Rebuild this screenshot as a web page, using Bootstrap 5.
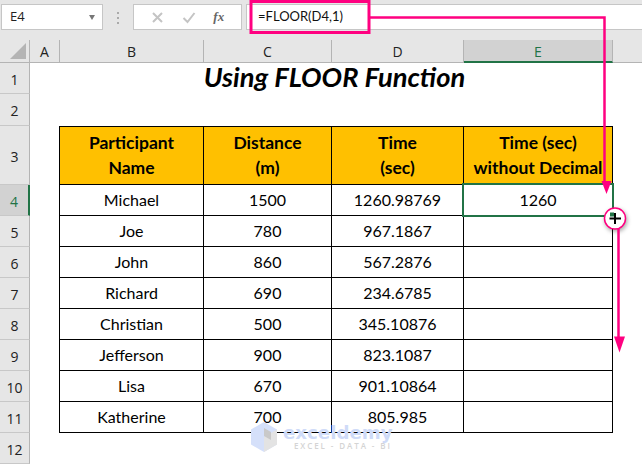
<!DOCTYPE html>
<html lang="en">
<head>
<meta charset="utf-8">
<title>Using FLOOR Function</title>
<link href="https://cdn.jsdelivr.net/npm/bootstrap@5.3.0/dist/css/bootstrap.min.css" rel="stylesheet">
<style>
html,body{margin:0;width:642px;height:468px;overflow:hidden;background:#fff}
.xl-app{position:relative;width:642px;height:468px;font-family:Lato,"Liberation Sans",sans-serif;color:#000;overflow:hidden}
.xl-ribbon{height:40px;background:#e6e6e6;padding:4px 0 0 1px;gap:0;align-items:flex-start}
.xl-box{height:26px;background:#fff;border:1px solid #c6c6c6;display:flex;align-items:center}
.xl-name{width:102px;padding:0 8px;font-size:13px;color:#222;justify-content:space-between;font-family:"Open Sans",sans-serif}
.xl-caret{width:0;height:0;border:3.5px solid transparent;border-top:5px solid #777;border-bottom:0;margin-right:-1px}
.xl-dots{width:30px;display:flex;flex-direction:column;align-items:center;gap:3px;padding-top:8px}
.xl-dots i{display:block;width:2px;height:2px;background:#aaa}
.xl-fx{width:109px;justify-content:space-around;padding:0 8px;color:#bbb}
.xl-fxlabel{font-family:"Liberation Serif",serif;font-style:italic;font-weight:700;font-size:13px;color:#666}
.xl-formula{flex:1;margin-left:4px;border-right:0;padding-left:11px;font-size:13px;font-family:Lato,sans-serif;color:#111}
.xl-grid{display:grid;grid-template-columns:30px 30px 144px 128px 132px 149px 29px;grid-template-rows:23px 31px 32px 59px 31px repeat(8,31px);background:#fff}
.xl-ch{background:#e6e6e6;border-right:1px solid #b4b4b4;border-bottom:1px solid #b4b4b4;display:flex;align-items:center;justify-content:center;font-size:14px;font-family:"Open Sans",sans-serif;color:#222;padding-top:1px}
.xl-corner{position:relative}
.xl-corner::after{content:"";position:absolute;right:3px;bottom:3px;border-style:solid;border-width:0 0 16px 16px;border-color:transparent transparent #b4b4b4 transparent}
.xl-fill{background:#e6e6e6;border-bottom:1px solid #b4b4b4}
.xl-sel{background:#d2d2d2;color:#217346;border-right:1px solid #b4b4b4;border-bottom:2px solid #217346}
.xl-rh{grid-column:1;background:#e6e6e6;border-right:1px solid #b4b4b4;border-bottom:1px solid #c8c8c8;display:flex;align-items:center;justify-content:center;font-size:14px;font-family:"Open Sans",sans-serif;color:#222;padding-top:2px}
.xl-rh-on{background:#d2d2d2;color:#217346;border-right:2px solid #217346}
.xl-title{grid-column:3/7;display:flex;align-items:center;justify-content:center;font-size:27.300px;font-weight:700;font-style:italic;line-height:1;padding:0 4px 4px 0}
.xl-a{grid-column:2;border-right:1px solid #000}
.xl-td{display:flex;align-items:center;justify-content:center;text-align:center;font-size:16px;border-right:1px solid #000;border-bottom:1px solid #000;line-height:25px;color:#000;padding-bottom:1px}
.xl-th{background:#ffc000;font-weight:700;font-size:17.500px;border-top:1px solid #000;line-height:25px}
.xl-out{position:absolute;left:462px;top:183px;width:152px;height:34px;border:2px solid #217346;pointer-events:none}
.xl-over{position:absolute;left:0;top:0;pointer-events:none}
.xl-mark{position:absolute;left:250px;top:421px;pointer-events:none}
.xl-mk1{position:absolute;left:33px;top:-2px;font-family:"DejaVu Sans",sans-serif;font-weight:700;font-size:18.200px;color:#cfdbf8;white-space:nowrap}
.xl-mk2{position:absolute;left:44px;top:19px;font-family:"Open Sans",sans-serif;font-weight:600;font-size:8px;color:#d4d4d4;letter-spacing:1.900px;white-space:nowrap}
</style>
</head>
<body>
<div class="xl-app">
  <div class="xl-ribbon d-flex">
    <div class="xl-box xl-name"><span>E4</span><span class="xl-caret"></span></div>
    <div class="xl-dots"><i></i><i></i><i></i></div>
    <div class="xl-box xl-fx">
      <svg width="13" height="13" viewBox="0 0 13 13"><path d="M2 2l9 9M11 2l-9 9" stroke="#c4c4c4" stroke-width="2" fill="none"/></svg>
      <svg width="14" height="13" viewBox="0 0 14 13"><path d="M1.500 7l4 4 7-9" stroke="#c4c4c4" stroke-width="2" fill="none"/></svg>
      <span class="xl-fxlabel">fx</span>
    </div>
    <div class="xl-box xl-formula">=FLOOR(D4,1)</div>
  </div>
  <div class="xl-grid">
    <div class="xl-ch xl-corner"></div><div class="xl-ch">A</div><div class="xl-ch">B</div><div class="xl-ch">C</div><div class="xl-ch">D</div><div class="xl-ch xl-sel">E</div><div class="xl-fill"></div>

    <div class="xl-rh">1</div><div class="xl-title">Using FLOOR Function</div>
    <div class="xl-rh">2</div>

    <div class="xl-rh">3</div><div class="xl-a"></div>
    <div class="xl-td xl-th">Participant<br>Name</div><div class="xl-td xl-th">Distance<br>(m)</div><div class="xl-td xl-th">Time<br>(sec)</div><div class="xl-td xl-th">Time (sec)<br>without Decimal</div>

    <div class="xl-rh xl-rh-on">4</div><div class="xl-a"></div>
    <div class="xl-td">Michael</div><div class="xl-td">1500</div><div class="xl-td">1260.98769</div><div class="xl-td">1260</div>

    <div class="xl-rh">5</div><div class="xl-a"></div>
    <div class="xl-td">Joe</div><div class="xl-td">780</div><div class="xl-td">967.1867</div><div class="xl-td"></div>

    <div class="xl-rh">6</div><div class="xl-a"></div>
    <div class="xl-td">John</div><div class="xl-td">860</div><div class="xl-td">567.2876</div><div class="xl-td"></div>

    <div class="xl-rh">7</div><div class="xl-a"></div>
    <div class="xl-td">Richard</div><div class="xl-td">690</div><div class="xl-td">234.6785</div><div class="xl-td"></div>

    <div class="xl-rh">8</div><div class="xl-a"></div>
    <div class="xl-td">Christian</div><div class="xl-td">500</div><div class="xl-td">345.10876</div><div class="xl-td"></div>

    <div class="xl-rh">9</div><div class="xl-a"></div>
    <div class="xl-td">Jefferson</div><div class="xl-td">900</div><div class="xl-td">823.1087</div><div class="xl-td"></div>

    <div class="xl-rh">10</div><div class="xl-a"></div>
    <div class="xl-td">Lisa</div><div class="xl-td">670</div><div class="xl-td">901.10864</div><div class="xl-td"></div>

    <div class="xl-rh">11</div><div class="xl-a"></div>
    <div class="xl-td">Katherine</div><div class="xl-td">700</div><div class="xl-td">805.985</div><div class="xl-td"></div>

    <div class="xl-rh">12</div>
  </div>
  <div class="xl-out"></div>
  <div class="xl-mark">
    <svg width="28" height="32" viewBox="0 0 28 32"><path d="M14 1L27 8.500V23.500L14 31 1 23.500V8.500Z" fill="#d5e0fa"/><path d="M14 16L27 8.500V23.500L14 31Z" fill="#e3e3e3"/><path d="M14 7l7 4v8l-7-4z" fill="#c9c9c9"/></svg>
    <span class="xl-mk1">exceldemy</span>
    <span class="xl-mk2">EXCEL - DATA - BI</span>
  </div>
  <svg class="xl-over" width="642" height="468" viewBox="0 0 642 468">
    <rect x="251" y="1.500" width="118" height="31" fill="none" stroke="#ff0080" stroke-width="3"/>
    <path d="M369 17.500H604.500V182" fill="none" stroke="#ff0080" stroke-width="2.500"/>
    <path d="M601.500 181h10l-5 13z" fill="#ff0080"/>
    <circle cx="615" cy="218.500" r="10.500" fill="#fff" stroke="#ff0080" stroke-width="1.500" style="filter:drop-shadow(1px 2px 2px rgba(0,0,0,.35))"/>
    <rect x="610" y="212.500" width="4" height="4" fill="#217346"/>
    <path d="M615 213v11M609.500 218.500h11.500" stroke="#000" stroke-width="2"/>
    <path d="M618.500 229V338" fill="none" stroke="#ff0080" stroke-width="2.500"/>
    <path d="M614 336.500h11l-5.500 16z" fill="#ff0080"/>
  </svg>
</div>
</body>
</html>
